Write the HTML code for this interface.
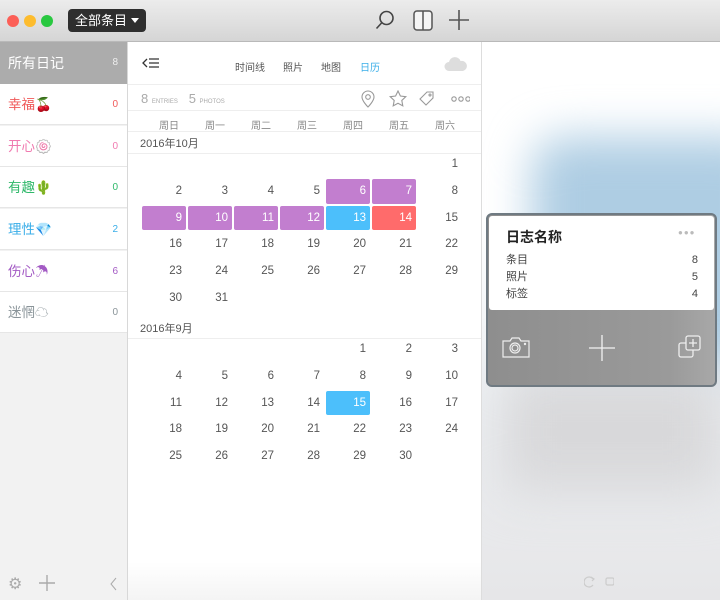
<!DOCTYPE html>
<html><head><meta charset="utf-8">
<style>
*{margin:0;padding:0;box-sizing:border-box}
body{width:720px;height:600px;overflow:hidden;font-family:"Liberation Sans","Noto Sans CJK SC",sans-serif;background:#fff;position:relative}
.abs{position:absolute}
#title{left:0;top:0;width:720px;height:42px;background:linear-gradient(#ececec,#d5d5d5);border-bottom:1px solid #b9b9b9;z-index:2}
.dot{width:12px;height:12px;border-radius:50%;top:15px}
#side{left:0;top:42px;width:128px;height:558px;background:#f2f2f2;border-right:1px solid #d8d8d8}
.it{position:absolute;left:0;width:127px;height:41px;background:#fff;border-bottom:1px solid #e6e6e6;font-size:13.5px;line-height:41px;padding-left:8px}
.it span{position:absolute;right:9px;font-size:10px}
#main{left:128px;top:42px;width:354px;height:558px;background:#fff;border-right:1px solid #ddd;z-index:1}
.tab{font-size:10px;color:#555;top:17px}
.wk{font-size:10px;color:#888;top:75px;width:46px;text-align:center}
.mh{font-size:11px;color:#555;left:12px}
.line{left:0;width:353px;height:1px;background:#eee}
.grid{position:absolute;z-index:0;left:13px;display:grid;grid-template-columns:repeat(7,46px);grid-auto-rows:26.8px}
.grid div{font-size:11.5px;color:#555;text-align:right;padding-right:5px;line-height:26.8px;position:relative}
.grid div.h{color:#fff}
.grid div.h::before{content:"";position:absolute;left:1px;right:1px;top:1px;bottom:1px;border-radius:2px;z-index:-1}
.p::before{background:#c27ecf}.b::before{background:#4cbffb}.r::before{background:#ff6b6b}
#right{left:482px;top:42px;width:238px;height:558px;overflow:hidden;background:linear-gradient(#fff 30%,#eef1f4 60%,#e6e6e8 100%)}
</style></head><body>
<div id="title" class="abs">
 <div class="abs dot" style="left:7px;background:#fc5f57"></div>
 <div class="abs dot" style="left:24px;background:#fdbc2e"></div>
 <div class="abs dot" style="left:41px;background:#29c840"></div>
 <div class="abs" style="left:68px;top:9px;width:78px;height:23px;background:#2e2e2e;border-radius:4px;color:#fff;font-size:13px;line-height:23px;padding-left:7px">全部条目<span style="position:absolute;right:7px;top:9px;border:4px solid transparent;border-top:5px solid #fff"></span></div>
 <svg class="abs" style="left:374px;top:9px" width="22" height="22" viewBox="0 0 22 22" fill="none" stroke="#444" stroke-width="1.6"><circle cx="12.5" cy="9" r="6.5"/><path d="M8 13.5L2.5 19.5"/></svg>
 <svg class="abs" style="left:413px;top:10px" width="20" height="21"><rect x="1" y="1" width="18" height="19" rx="3" fill="#f5f5f5" stroke="#555" stroke-width="1.5"/><path d="M10 1v19" stroke="#555" stroke-width="1.5"/></svg>
 <svg class="abs" style="left:448px;top:9px" width="22" height="22" stroke="#555" stroke-width="1.6"><path d="M11 1v20M1 11h20"/></svg>
</div>
<div id="side" class="abs">
 <div class="it" style="top:0;height:42px;background:#acacac;color:#fff;font-size:14px;line-height:42px;border:none">所有日记<span style="color:#eee">8</span></div>
 <div class="it" style="top:42px;color:#f05a5a">幸福🍒<span>0</span></div>
 <div class="it" style="top:84px;color:#f07ab0">开心🍥<span>0</span></div>
 <div class="it" style="top:125px;color:#2fb86a">有趣🌵<span>0</span></div>
 <div class="it" style="top:167px;color:#3aaee8">理性💎<span>2</span></div>
 <div class="it" style="top:209px;color:#a35ac4">伤心☂<span>6</span></div>
 <div class="it" style="top:250px;color:#8a9499">迷惘☁<span>0</span></div>
 <div class="abs" style="left:8px;top:532px;color:#aaa;font-size:16px">⚙</div>
 <svg class="abs" style="left:39px;top:533px" width="16" height="16" stroke="#aaa" stroke-width="1.4"><path d="M8 0v16M0 8h16"/></svg>
 <svg class="abs" style="left:110px;top:535px" width="8" height="14" fill="none" stroke="#aaa"><path d="M6 1L1 7l5 6"/></svg>
</div>
<div id="main" class="abs">
 <svg class="abs" style="left:14px;top:15px" width="18" height="12" fill="none" stroke="#333" stroke-width="1.3"><path d="M5 2L1 6l4 4M7 2h10M7 6h10M7 10h10"/></svg>
 <div class="abs tab" style="left:107px">时间线</div>
 <div class="abs tab" style="left:155px">照片</div>
 <div class="abs tab" style="left:193px">地图</div>
 <div class="abs tab" style="left:232px;color:#3aaee8">日历</div>
 <svg class="abs" style="left:316px;top:15px" width="24" height="15"><path d="M5 14a4.5 4.5 0 010-9 6 6 0 0111.5-1A4.5 4.5 0 0119 14z" fill="#ddd"/></svg>
 <div class="abs line" style="top:42px"></div>
 <div class="abs" style="left:13px;top:49px;color:#aaa;font-size:13px">8 <span style="font-size:6px">ENTRIES</span>&nbsp;&nbsp; 5 <span style="font-size:6px">PHOTOS</span></div>
 <svg class="abs" style="left:232px;top:48px" width="110" height="18" fill="none" stroke="#999" stroke-width="1.1"><path d="M8 17s-6-6-6-10a6 6 0 0112 0c0 4-6 10-6 10z"/><circle cx="8" cy="7" r="2.3"/><path d="M38 1l2.4 5 5.4.7-4 3.8 1 5.4-4.8-2.6-4.8 2.6 1-5.4-4-3.8 5.4-.7z"/><path d="M60 9l7-7h6v6l-7 7z"/><circle cx="70" cy="5" r="1"/><circle cx="94" cy="9" r="2.2"/><circle cx="101" cy="9" r="2.2"/><circle cx="108" cy="9" r="2.2"/></svg>
 <div class="abs line" style="top:68px"></div>
 <div class="abs wk" style="left:18px">周日</div><div class="abs wk" style="left:64px">周一</div><div class="abs wk" style="left:110px">周二</div><div class="abs wk" style="left:156px">周三</div><div class="abs wk" style="left:202px">周四</div><div class="abs wk" style="left:248px">周五</div><div class="abs wk" style="left:294px">周六</div>
 <div class="abs line" style="top:89px"></div>
 <div class="abs mh" style="top:93px">2016年10月</div>
 <div class="abs line" style="top:111px"></div>
 <div class="grid" style="top:109px">
  <div></div><div></div><div></div><div></div><div></div><div></div><div>1</div>
  <div>2</div><div>3</div><div>4</div><div>5</div><div class="h p">6</div><div class="h p">7</div><div>8</div>
  <div class="h p">9</div><div class="h p">10</div><div class="h p">11</div><div class="h p">12</div><div class="h b">13</div><div class="h r">14</div><div>15</div>
  <div>16</div><div>17</div><div>18</div><div>19</div><div>20</div><div>21</div><div>22</div>
  <div>23</div><div>24</div><div>25</div><div>26</div><div>27</div><div>28</div><div>29</div>
  <div>30</div><div>31</div>
 </div>
 <div class="abs mh" style="top:278px">2016年9月</div>
 <div class="abs line" style="top:296px"></div>
 <div class="grid" style="top:294px">
  <div></div><div></div><div></div><div></div><div>1</div><div>2</div><div>3</div>
  <div>4</div><div>5</div><div>6</div><div>7</div><div>8</div><div>9</div><div>10</div>
  <div>11</div><div>12</div><div>13</div><div>14</div><div class="h b">15</div><div>16</div><div>17</div>
  <div>18</div><div>19</div><div>20</div><div>21</div><div>22</div><div>23</div><div>24</div>
  <div>25</div><div>26</div><div>27</div><div>28</div><div>29</div><div>30</div>
 </div>
 <div class="abs" style="left:0;top:520px;width:353px;height:38px;background:linear-gradient(#fff,#f4f4f4)"></div>
</div>
<div id="right" class="abs">
 <div class="abs" style="left:50px;top:95px;width:240px;height:230px;background:#aecde3;filter:blur(22px);border-radius:30px"></div>
 <div class="abs" style="left:20px;top:330px;width:220px;height:120px;background:#d8d8da;filter:blur(25px)"></div>
 <div class="abs" style="left:4px;top:171px;width:231px;height:174px;border-radius:6px;background:linear-gradient(90deg,#8e8e8e,#9a9a9a 80%,#a8a8a8);border:2px solid #6f7a82"></div>
 <div class="abs" style="left:7px;top:174px;width:225px;height:94px;background:#fff;border-radius:3px"></div>
 <div class="abs" style="left:24px;top:185px;font-size:14px;font-weight:bold;color:#222">日志名称</div>
 <div class="abs" style="left:196px;top:186px;color:#bbb;font-size:8px;letter-spacing:1px">●●●</div>
 <div class="abs" style="left:24px;top:210px;font-size:11px;color:#444;line-height:17px">条目<br>照片<br>标签</div>
 <div class="abs" style="left:190px;top:210px;width:26px;text-align:right;font-size:11px;color:#444;line-height:17px">8<br>5<br>4</div>
 <svg class="abs" style="left:20px;top:294px" width="28" height="22" fill="none" stroke="#eee" stroke-width="1.2"><path d="M1 5h7l2-3h7l2 3h8v16H1z"/><circle cx="13" cy="12" r="5"/><circle cx="13" cy="12" r="3"/><circle cx="23" cy="8" r=".6"/></svg>
 <svg class="abs" style="left:106px;top:292px" width="28" height="28" stroke="#f2f2f2" stroke-width="1.3"><path d="M14 1v26M1 14h26"/></svg>
 <svg class="abs" style="left:196px;top:293px" width="24" height="24" fill="none" stroke="#eee" stroke-width="1.3"><rect x="1" y="8" width="14" height="14" rx="2"/><rect x="8" y="1" width="14" height="14" rx="2" fill="#999"/><path d="M15 4v8M11 8h8"/></svg>
 <svg class="abs" style="left:102px;top:534px" width="30" height="12" fill="none" stroke="#ccc" stroke-width="1.2"><path d="M9 3a5 5 0 100 6"/><path d="M7 1l3 2-2 2"/><rect x="22" y="2" width="8" height="7" rx="1.5"/></svg>
</div>
</body></html>
